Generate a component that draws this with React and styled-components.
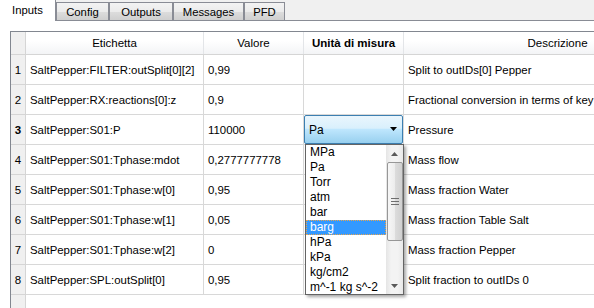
import React from "react";
import styled, { createGlobalStyle } from "styled-components";

const GlobalStyle = createGlobalStyle`
  html, body {
    margin: 0;
    padding: 0;
    background: #ffffff;
    overflow: hidden;
  }
  body {
    font-family: "Liberation Sans", Arial, sans-serif;
    color: #000;
  }
`;

const rows = [
  { label: "SaltPepper:FILTER:outSplit[0][2]", value: "0,99", desc: "Split to outIDs[0] Pepper" },
  { label: "SaltPepper:RX:reactions[0]:z", value: "0,9", desc: "Fractional conversion in terms of key component" },
  { label: "SaltPepper:S01:P", value: "110000", desc: "Pressure", combo: true },
  { label: "SaltPepper:S01:Tphase:mdot", value: "0,2777777778", desc: "Mass flow" },
  { label: "SaltPepper:S01:Tphase:w[0]", value: "0,95", desc: "Mass fraction Water" },
  { label: "SaltPepper:S01:Tphase:w[1]", value: "0,05", desc: "Mass fraction Table Salt" },
  { label: "SaltPepper:S01:Tphase:w[2]", value: "0", desc: "Mass fraction Pepper" },
  { label: "SaltPepper:SPL:outSplit[0]", value: "0,95", desc: "Split fraction to outIDs 0" },
];

const units = ["MPa", "Pa", "Torr", "atm", "bar", "barg", "hPa", "kPa", "kg/cm2", "m^-1 kg s^-2"];

const tabs = [
  { name: "Inputs", width: 56 },
  { name: "Config", width: 53 },
  { name: "Outputs", width: 64 },
  { name: "Messages", width: 71 },
  { name: "PFD", width: 41 },
];

const App = () => {
  return (
    <Window>
      <GlobalStyle />
      <TabBar>
        {tabs.map((t, i) => (
          <Tab key={t.name} $active={i === 0} $w={t.width}>
            {t.name}
          </Tab>
        ))}
      </TabBar>
      <Pane>
        <Grid>
          <HeaderRow>
            <Corner />
            <HeadCell>Etichetta</HeadCell>
            <HeadCell>Valore</HeadCell>
            <HeadCell $bold>Unità di misura</HeadCell>
            <HeadCell>Descrizione</HeadCell>
          </HeaderRow>
          {rows.map((r, i) => (
            <Row key={i}>
              <RowNum $current={r.combo}>{i + 1}</RowNum>
              <Cell>{r.label}</Cell>
              <Cell>{r.value}</Cell>
              <UnitCell>
                {r.combo && (
                  <Combo>
                    <ComboText>Pa</ComboText>
                    <svg width="8" height="5" viewBox="0 0 8 5">
                      <path d="M0 0 H7 L3.5 4 Z" fill="#000" />
                    </svg>
                    <DropList>
                      <Items>
                        {units.map((u) => (
                          <Item key={u} $selected={u === "barg"}>
                            {u}
                          </Item>
                        ))}
                      </Items>
                      <ScrollBar>
                        <ArrowBtn>
                          <svg width="7" height="4" viewBox="0 0 7 4">
                            <path d="M0 4 L3.5 0 L7 4 Z" fill="#5a5a5a" />
                          </svg>
                        </ArrowBtn>
                        <Track>
                          <Thumb>
                            <svg width="8" height="7" viewBox="0 0 8 7">
                              <path d="M0 0.5 H8 M0 3.5 H8 M0 6.5 H8" stroke="#6e6e6e" strokeWidth="1" />
                            </svg>
                          </Thumb>
                        </Track>
                        <ArrowBtn>
                          <svg width="7" height="4" viewBox="0 0 7 4">
                            <path d="M0 0 L3.5 4 L7 0 Z" fill="#5a5a5a" />
                          </svg>
                        </ArrowBtn>
                      </ScrollBar>
                    </DropList>
                  </Combo>
                )}
              </UnitCell>
              <Cell>{r.desc}</Cell>
            </Row>
          ))}
          <FillerRow>
            <RowNum />
          </FillerRow>
        </Grid>
      </Pane>
    </Window>
  );
};

export default App;

const Window = styled.div`
  width: 594px;
  height: 308px;
  overflow: hidden;
  display: flex;
  flex-direction: column;
`;

const TabBar = styled.div`
  height: 20px;
  flex: none;
  display: flex;
  align-items: flex-end;
  gap: 1px;
  background: #f0f0f0;
  border-bottom: 1px solid #898c95;
`;

const Tab = styled.div`
  box-sizing: border-box;
  width: ${(p) => p.$w}px;
  height: ${(p) => (p.$active ? "21px" : "18px")};
  margin-bottom: ${(p) => (p.$active ? "-1px" : "0")};
  margin-left: ${(p) => (p.$active ? "0" : "-1px")};
  padding-bottom: ${(p) => (p.$active ? "1px" : "0")};
  display: flex;
  align-items: center;
  justify-content: center;
  font-size: 11.3px;
  color: #000;
  border: 1px solid #898c95;
  border-bottom: none;
  border-left: ${(p) => (p.$active ? "none" : "1px solid #898c95")};
  border-top: ${(p) => (p.$active ? "none" : "1px solid #898c95")};
  background: ${(p) =>
    p.$active ? "#ffffff" : "linear-gradient(#f3f3f3 0%, #ebebeb 50%, #dddddd 51%, #cfcfcf 100%)"};
  &:first-child {
    margin-left: 0;
  }
`;

const Pane = styled.div`
  flex: 1;
  background: #ffffff;
  padding: 10px 0 0 10px;
  overflow: hidden;
`;

const Grid = styled.div`
  width: 720px;
  height: 400px;
  border-left: 1px solid #828790;
  border-top: 1px solid #828790;
`;

const cols = "15px 178px 100px 100px 308px";

const HeaderRow = styled.div`
  display: grid;
  grid-template-columns: ${cols};
  height: 22px;
  background: linear-gradient(#ffffff 0%, #ffffff 40%, #f3f4f6 100%);
  border-bottom: 1px solid #d5d5d5;
`;

const Corner = styled.div`
  background: #f0f0f0;
  border-right: 1px solid #d5d5d5;
`;

const HeadCell = styled.div`
  box-sizing: border-box;
  display: flex;
  align-items: center;
  justify-content: center;
  font-size: 11.5px;
  font-weight: ${(p) => (p.$bold ? "bold" : "normal")};
  border-right: 1px solid #e3e5e8;
  white-space: nowrap;
`;

const Row = styled.div`
  display: grid;
  grid-template-columns: ${cols};
  height: 30px;
`;

const FillerRow = styled.div`
  display: grid;
  grid-template-columns: ${cols};
  height: 30px;
`;

const RowNum = styled.div`
  box-sizing: border-box;
  display: flex;
  align-items: center;
  justify-content: center;
  background: #f0f0f0;
  font-size: 11.5px;
  font-weight: ${(p) => (p.$current ? "bold" : "normal")};
  border-right: 1px solid #d5d5d5;
  border-bottom: 1px solid #d5d5d5;
`;

const Cell = styled.div`
  box-sizing: border-box;
  display: flex;
  align-items: center;
  padding-left: 4px;
  font-size: 11.4px;
  white-space: nowrap;
  overflow: hidden;
  border-right: 1px solid #d8d8d8;
  border-bottom: 1px solid #d8d8d8;
`;

const UnitCell = styled(Cell)`
  padding-left: 0;
  overflow: visible;
  align-items: stretch;
  position: relative;
`;

const Combo = styled.div`
  box-sizing: border-box;
  position: relative;
  width: calc(100% + 1px);
  display: flex;
  align-items: center;
  justify-content: space-between;
  padding: 0 4px 0 4px;
  border: 1px solid #3c7fb1;
  border-radius: 2px;
  background: linear-gradient(#eaf6fd 0%, #d9f0fc 45%, #bee6fd 50%, #98d0ef 100%);
  font-size: 12px;
  z-index: 2;
`;

const ComboText = styled.span`
  padding-top: 1px;
`;

const DropList = styled.div`
  box-sizing: border-box;
  position: absolute;
  top: 100%;
  left: 0;
  margin-top: 1px;
  width: 99px;
  height: 151px;
  display: flex;
  background: #ffffff;
  border: 1px solid #646464;
  box-shadow: 2px 2px 3px rgba(0, 0, 0, 0.35);
`;

const Items = styled.div`
  flex: 1;
  display: flex;
  flex-direction: column;
`;

const Item = styled.div`
  box-sizing: border-box;
  height: 15px;
  line-height: 13px;
  padding-left: 3px;
  font-size: 12px;
  white-space: nowrap;
  color: ${(p) => (p.$selected ? "#ffffff" : "#000000")};
  background: ${(p) => (p.$selected ? "#3399ff" : "transparent")};
  border: 1px dotted ${(p) => (p.$selected ? "#e9a54c" : "transparent")};
`;

const ScrollBar = styled.div`
  width: 17px;
  display: flex;
  flex-direction: column;
  background: linear-gradient(90deg, #e5e5e5, #f3f3f3 30%, #f3f3f3 70%, #e8e8e8);
`;

const ArrowBtn = styled.div`
  height: 17px;
  flex: none;
  display: flex;
  align-items: center;
  justify-content: center;
`;

const Track = styled.div`
  flex: 1;
  display: flex;
  flex-direction: column;
`;

const Thumb = styled.div`
  box-sizing: border-box;
  height: 79px;
  margin: 0 0 0 1px;
  display: flex;
  align-items: center;
  justify-content: center;
  border: 1px solid #979797;
  border-radius: 2px;
  background: linear-gradient(90deg, #f7f7f7 0%, #ececec 50%, #dcdcdc 51%, #d0d0d0 100%);
`;
